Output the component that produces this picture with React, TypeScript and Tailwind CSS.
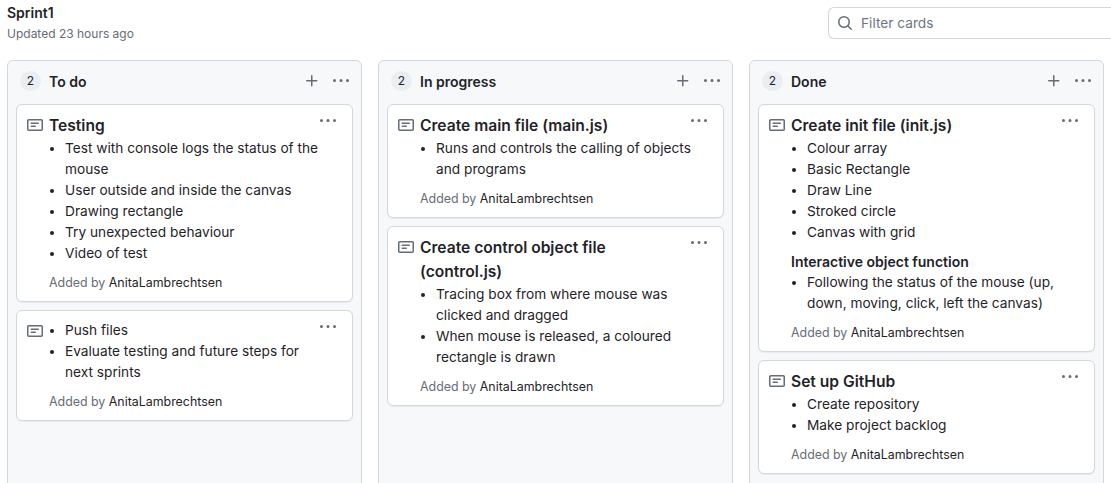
import React from 'react';

const NOTE_PATH =
  'M0 3.75C0 2.784.784 2 1.75 2h12.5c.966 0 1.75.784 1.75 1.75v8.5A1.75 1.75 0 0 1 14.25 14H1.75A1.75 1.75 0 0 1 0 12.25Zm1.75-.25a.25.25 0 0 0-.25.25v8.5c0 .138.112.25.25.25h12.5a.25.25 0 0 0 .25-.25v-8.5a.25.25 0 0 0-.25-.25ZM3.5 6.25a.75.75 0 0 1 .75-.75h7a.75.75 0 0 1 0 1.5h-7a.75.75 0 0 1-.75-.75Zm.75 2.25h4a.75.75 0 0 1 0 1.5h-4a.75.75 0 0 1 0-1.5Z';
const KEBAB_PATH =
  'M8 9a1.5 1.5 0 1 0 0-3 1.5 1.5 0 0 0 0 3ZM1.5 9a1.5 1.5 0 1 0 0-3 1.5 1.5 0 0 0 0 3Zm13 0a1.5 1.5 0 1 0 0-3 1.5 1.5 0 0 0 0 3Z';
const PLUS_PATH =
  'M7.75 2a.75.75 0 0 1 .75.75V7h4.25a.75.75 0 0 1 0 1.5H8.5v4.25a.75.75 0 0 1-1.5 0V8.5H2.75a.75.75 0 0 1 0-1.5H7V2.75A.75.75 0 0 1 7.75 2Z';
const SEARCH_PATH =
  'M10.68 11.74a6 6 0 0 1-7.922-8.982 6 6 0 0 1 8.982 7.922l3.04 3.04a.749.749 0 0 1-.326 1.275.749.749 0 0 1-.734-.215ZM11.5 7a4.499 4.499 0 1 0-8.997 0A4.499 4.499 0 0 0 11.5 7Z';

const Icon: React.FC<{ path: string; className?: string }> = ({ path, className }) => (
  <svg viewBox="0 0 16 16" width="16" height="16" fill="currentColor" className={className}>
    <path d={path} />
  </svg>
);

const Bullets: React.FC<{ items: string[] }> = ({ items }) => (
  <ul className="list-disc pl-4 marker:text-[#1f2328]">
    {items.map((item) => (
      <li key={item}>{item}</li>
    ))}
  </ul>
);

interface CardData {
  title?: string;
  items: string[];
  subheading?: string;
  subItems?: string[];
}

const Card: React.FC<{ card: CardData }> = ({ card }) => (
  <div className="relative bg-white border border-[#d0d7de] rounded-md shadow-[0_1px_1px_rgba(31,35,40,0.06)] pl-[10px] pr-[16px] pt-[8px] pb-[9px]">
    <button className="absolute right-[16px] top-[8px] text-[#656d76]">
      <Icon path={KEBAB_PATH} />
    </button>
    <div className="flex gap-[6px]">
      <Icon path={NOTE_PATH} className="shrink-0 mt-[4px] text-[#656d76]" />
      <div className="min-w-0 flex-1 pt-[1px]">
        {card.title && (
          <h3 className="text-[15.6px] leading-6 font-semibold text-[#1f2328] pr-[30px]">{card.title}</h3>
        )}
        <div className="text-[13.7px] leading-[21px] text-[#1f2328] pr-[10px]">
          <Bullets items={card.items} />
          {card.subheading && <p className="text-[14px] leading-[21px] font-semibold mt-2">{card.subheading}</p>}
          {card.subItems && <Bullets items={card.subItems} />}
        </div>
        <p className="mt-[10px] text-[12.4px] leading-[18px] text-[#656d76]">
          Added by <span className="text-[#1f2328]">AnitaLambrechtsen</span>
        </p>
      </div>
    </div>
  </div>
);

interface ColumnData {
  name: string;
  cards: CardData[];
}

const columns: ColumnData[] = [
  {
    name: 'To do',
    cards: [
      {
        title: 'Testing',
        items: [
          'Test with console logs the status of the mouse',
          'User outside and inside the canvas',
          'Drawing rectangle',
          'Try unexpected behaviour',
          'Video of test',
        ],
      },
      {
        items: ['Push files', 'Evaluate testing and future steps for next sprints'],
      },
    ],
  },
  {
    name: 'In progress',
    cards: [
      {
        title: 'Create main file (main.js)',
        items: ['Runs and controls the calling of objects and programs'],
      },
      {
        title: 'Create control object file (control.js)',
        items: [
          'Tracing box from where mouse was clicked and dragged',
          'When mouse is released, a coloured rectangle is drawn',
        ],
      },
    ],
  },
  {
    name: 'Done',
    cards: [
      {
        title: 'Create init file (init.js)',
        items: ['Colour array', 'Basic Rectangle', 'Draw Line', 'Stroked circle', 'Canvas with grid'],
        subheading: 'Interactive object function',
        subItems: ['Following the status of the mouse (up, down, moving, click, left the canvas)'],
      },
      {
        title: 'Set up GitHub',
        items: ['Create repository', 'Make project backlog'],
      },
    ],
  },
];

const Column: React.FC<{ column: ColumnData }> = ({ column }) => (
  <section className="w-[355px] shrink-0 h-[440px] bg-[#f6f8fa] border border-[#d0d7de] rounded-md px-2">
    <header className="h-[43px] flex items-center px-[4px] pb-[3px]">
      <span className="w-[21px] h-[20px] rounded-full bg-[#eaeef2] text-xs flex items-center justify-center text-[#1f2328]">
        {column.cards.length}
      </span>
      <h2 className="ml-[8px] mt-[1px] text-sm font-semibold text-[#1f2328]">{column.name}</h2>
      <div className="ml-auto flex items-center gap-[13px] text-[#656d76]">
        <Icon path={PLUS_PATH} />
        <Icon path={KEBAB_PATH} />
      </div>
    </header>
    <div className="flex flex-col gap-2">
      {column.cards.map((card, i) => (
        <Card key={i} card={card} />
      ))}
    </div>
  </section>
);

export default function App() {
  return (
    <div className="h-[483px] w-[1111px] overflow-hidden bg-white font-['Inter',sans-serif]">
      <div className="h-[60px] flex items-start justify-between pl-[7px]">
        <div>
          <h1 className="text-sm leading-[21px] font-semibold text-[#1f2328] mt-[2px]">Sprint1</h1>
          <p className="text-xs leading-[18px] mt-[2px] text-[#656d76]">Updated 23 hours ago</p>
        </div>
        <div className="mt-[7px] w-[283px] h-[32px] border border-[#d0d7de] border-r-0 rounded-l-md flex items-center pl-[8px] text-[#656d76]">
          <Icon path={SEARCH_PATH} />
          <span className="ml-[8px] text-[13.7px] text-[#6e7781]">Filter cards</span>
        </div>
      </div>
      <div className="flex gap-4 pl-[7px]">
        {columns.map((column) => (
          <Column key={column.name} column={column} />
        ))}
      </div>
    </div>
  );
}
